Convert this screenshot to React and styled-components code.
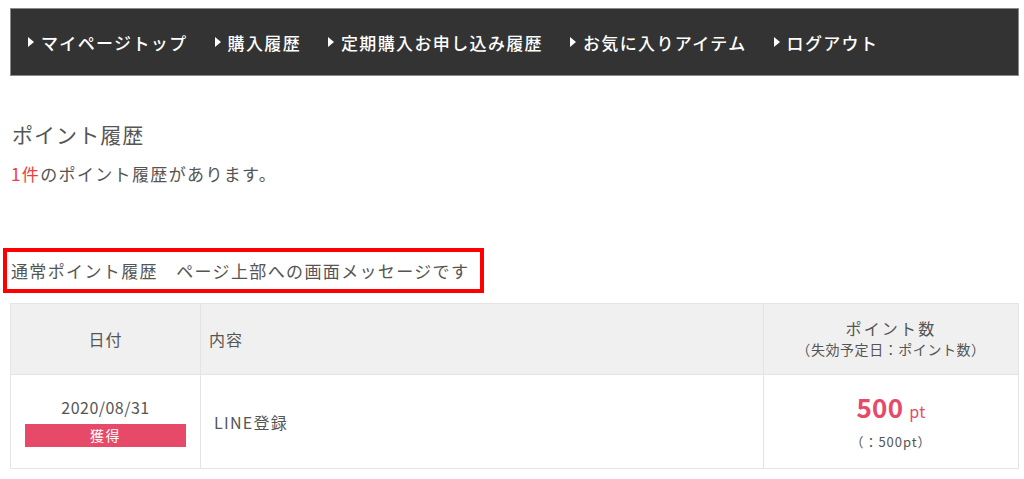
import React from "react";
import styled, { createGlobalStyle } from "styled-components";

const Global = createGlobalStyle`
  html, body { margin: 0; padding: 0; background: #fff; }
  body {
    font-family: "Noto Sans CJK JP", "Noto Sans", sans-serif;
    color: #555;
  }
`;

const Page = styled.div`
  padding: 8px 5px 0 10px;
  width: 1009px;
`;

const Nav = styled.nav`
  height: 66px;
  background: #333;
  border: 1px solid #8a8a8a;
  display: flex;
  align-items: center;
  padding-left: 17px;
  gap: 27px;
`;

const NavItem = styled.a`
  display: flex;
  align-items: center;
  gap: 7px;
  color: #fff;
  font-size: 17px;
  font-weight: 500;
  letter-spacing: 0.08em;
  text-decoration: none;
  line-height: 1;
  &::before {
    content: "";
    width: 0;
    height: 0;
    border-top: 5px solid transparent;
    border-bottom: 5px solid transparent;
    border-left: 6px solid #fff;
  }
`;

const Title = styled.h2`
  margin: 44px 0 0 2px;
  font-size: 21px;
  font-weight: 400;
  letter-spacing: 0.05em;
  line-height: 28px;
  color: #555;
`;

const Count = styled.p`
  margin: 14px 0 0 1px;
  font-size: 17px;
  line-height: 24px;
  letter-spacing: 0.08em;
  color: #555;
`;

const Red = styled.span`
  color: #f03c3c;
`;

const MessageBox = styled.div`
  margin: 62px 0 0 -7px;
  width: 469px;
  height: 37px;
  border: 4px solid #f00;
  display: flex;
  align-items: center;
  padding-left: 4px;
  font-size: 17px;
  letter-spacing: 0.08em;
  color: #555;
  white-space: nowrap;
`;

const Table = styled.table`
  margin-top: 10px;
  width: 1009px;
  border-collapse: collapse;
  table-layout: fixed;
  font-size: 16px;
  color: #555;
  letter-spacing: 0.06em;
`;

const Th = styled.th`
  background: #f0f0f0;
  border: 1px solid #e4e4e4;
  height: 70px;
  font-weight: 400;
  text-align: ${(p) => p.$align || "center"};
  padding: ${(p) => (p.$align === "left" ? "0 0 0 8px" : "0")};
  width: ${(p) => p.$w || "auto"};
  vertical-align: middle;
`;

const Td = styled.td`
  border: 1px solid #e4e4e4;
  height: 93px;
  text-align: ${(p) => p.$align || "center"};
  padding: ${(p) => (p.$align === "left" ? "0 0 0 13px" : "0")};
  vertical-align: middle;
`;

const HeadMain = styled.div`
  font-size: 16px;
  line-height: 22px;
  letter-spacing: 0.14em;
  margin-top: -2px;
`;

const HeadSub = styled.div`
  font-size: 14px;
  line-height: 20px;
  letter-spacing: 0.04em;
`;

const DateText = styled.div`
  font-size: 16px;
  line-height: 22px;
  letter-spacing: 0.03em;
`;

const Badge = styled.div`
  margin: 6px auto 0;
  width: 161px;
  height: 23px;
  background: #e64a68;
  color: #fff;
  font-size: 14px;
  line-height: 23px;
  letter-spacing: 0.1em;
`;

const Content = styled.span`
  font-size: 16px;
  letter-spacing: 0.08em;
`;

const Points = styled.div`
  color: #e64a68;
  font-size: 26px;
  font-weight: 700;
  line-height: 30px;
  letter-spacing: 0.01em;
`;

const Unit = styled.span`
  font-size: 16px;
  font-weight: 400;
  margin-left: 6px;
`;

const Sub = styled.div`
  font-size: 13px;
  line-height: 20px;
  margin-top: 6px;
  color: #555;
`;

const navItems = [
  "マイページトップ",
  "購入履歴",
  "定期購入お申し込み履歴",
  "お気に入りアイテム",
  "ログアウト",
];

export default function App() {
  return (
    <>
      <Global />
      <Page>
        <Nav>
          {navItems.map((t) => (
            <NavItem key={t} href="#">
              {t}
            </NavItem>
          ))}
        </Nav>
        <Title>ポイント履歴</Title>
        <Count>
          <Red>1件</Red>のポイント履歴があります。
        </Count>
        <MessageBox>通常ポイント履歴　ページ上部への画面メッセージです</MessageBox>
        <Table>
          <thead>
            <tr>
              <Th $w="189px">日付</Th>
              <Th $align="left">内容</Th>
              <Th $w="254px">
                <HeadMain>ポイント数</HeadMain>
                <HeadSub>（失効予定日：ポイント数）</HeadSub>
              </Th>
            </tr>
          </thead>
          <tbody>
            <tr>
              <Td>
                <DateText>2020/08/31</DateText>
                <Badge>獲得</Badge>
              </Td>
              <Td $align="left">
                <Content>LINE登録</Content>
              </Td>
              <Td>
                <Points>
                  500<Unit>pt</Unit>
                </Points>
                <Sub>（：500pt）</Sub>
              </Td>
            </tr>
          </tbody>
        </Table>
      </Page>
    </>
  );
}
